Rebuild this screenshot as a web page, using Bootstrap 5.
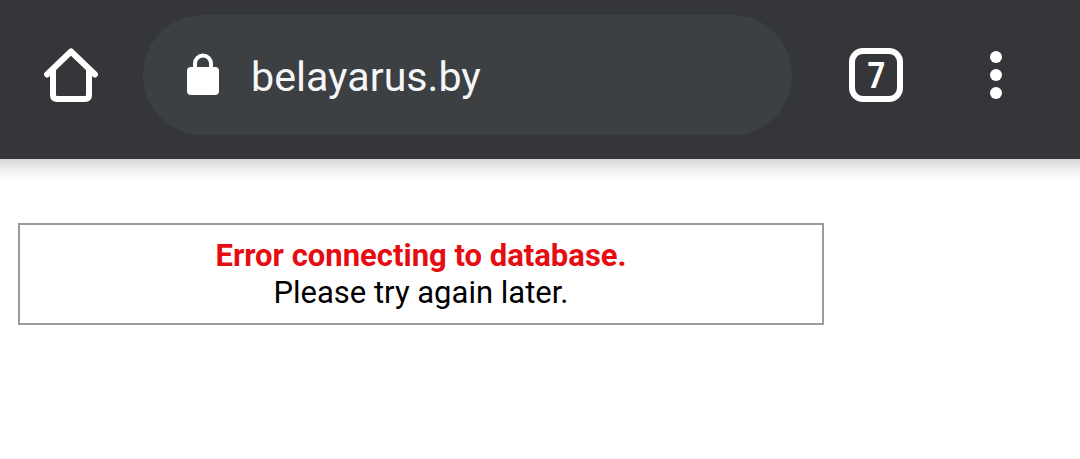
<!DOCTYPE html>
<html lang="en">
<head>
    <meta charset="UTF-8">
    <meta name="viewport" content="width=device-width, initial-scale=1.0">
    <title>belayarus.by</title>
    <link rel="stylesheet" href="https://cdn.jsdelivr.net/npm/bootstrap@5.3.0/dist/css/bootstrap.min.css">
    <style>
        body {
            background: #fff;
            font-family: Roboto, "Liberation Sans", sans-serif;
            overflow: hidden;
        }
        .browser-bar {
            height: 159px;
            padding: 15px 78px 24px 44px;
            background: #35363a;
        }
        .home-link {
            width: 54px;
            margin-right: 45px;
        }
        .address-bar {
            width: 649px;
            height: 120px;
            padding-left: 44px;
            padding-bottom: 2px;
            margin-right: 57px;
            background: #3c4043;
            color: #f5f6f8;
        }
        .address-text {
            margin-left: 32px;
            font-size: 41.2px;
            line-height: 48px;
            padding-top: 5px;
        }
        .tab-count {
            width: 54px;
            height: 54px;
            border: 6px solid #fff;
            border-radius: 14px;
            margin-right: 87px;
            padding-top: 2px;
        }
        .tab-count span {
            font-size: 36px;
            line-height: 42px;
            transform: scaleX(.86);
        }
        .bar-shadow {
            height: 23px;
            background: linear-gradient(#d6d6d6, #ececec 40%, #fbfbfb 80%, #fff);
        }
        .db-error {
            width: 806px;
            height: 102px;
            margin: 41px 0 0 18px;
            padding-top: 12px;
            border: 2px solid #9b9b9b;
            color: #000;
            font-size: 31px;
            line-height: 37px;
        }
        .db-error strong {
            color: #e50d12;
        }
    </style>
</head>
<body>
    <nav class="browser-bar d-flex align-items-center">
        <a href="#" class="home-link d-flex" aria-label="Home">
            <svg width="54" height="54" viewBox="0 0 54 54" fill="none" stroke="#fff" stroke-width="6" stroke-linecap="round" stroke-linejoin="round">
                <path d="M3 26.500 27 3.500 51 26.500M9 22V47Q9 51 13 51H41Q45 51 45 47V22"/>
            </svg>
        </a>
        <div class="address-bar d-flex align-items-center rounded-pill">
            <svg width="32" height="42" viewBox="0 0 32 42">
                <rect x="0" y="14" width="32" height="28" rx="4" fill="#fff"/>
                <path d="M8 16V10.500a8 8 0 0 1 16 0V16" fill="none" stroke="#fff" stroke-width="4"/>
            </svg>
            <span class="address-text">belayarus.by</span>
        </div>
        <div class="tab-count d-flex align-items-center justify-content-center text-white fw-bold"><span>7</span></div>
        <svg width="12" height="48" viewBox="0 0 12 48" fill="#fff">
            <circle cx="6" cy="6" r="6"/>
            <circle cx="6" cy="24" r="6"/>
            <circle cx="6" cy="42" r="6"/>
        </svg>
    </nav>
    <div class="bar-shadow"></div>

    <main class="db-error text-center">
        <strong>Error connecting to database.</strong><br>
        Please try again later.
    </main>

    <script src="https://cdn.jsdelivr.net/npm/bootstrap@5.3.0/dist/js/bootstrap.bundle.min.js"></script>
</body>
</html>
